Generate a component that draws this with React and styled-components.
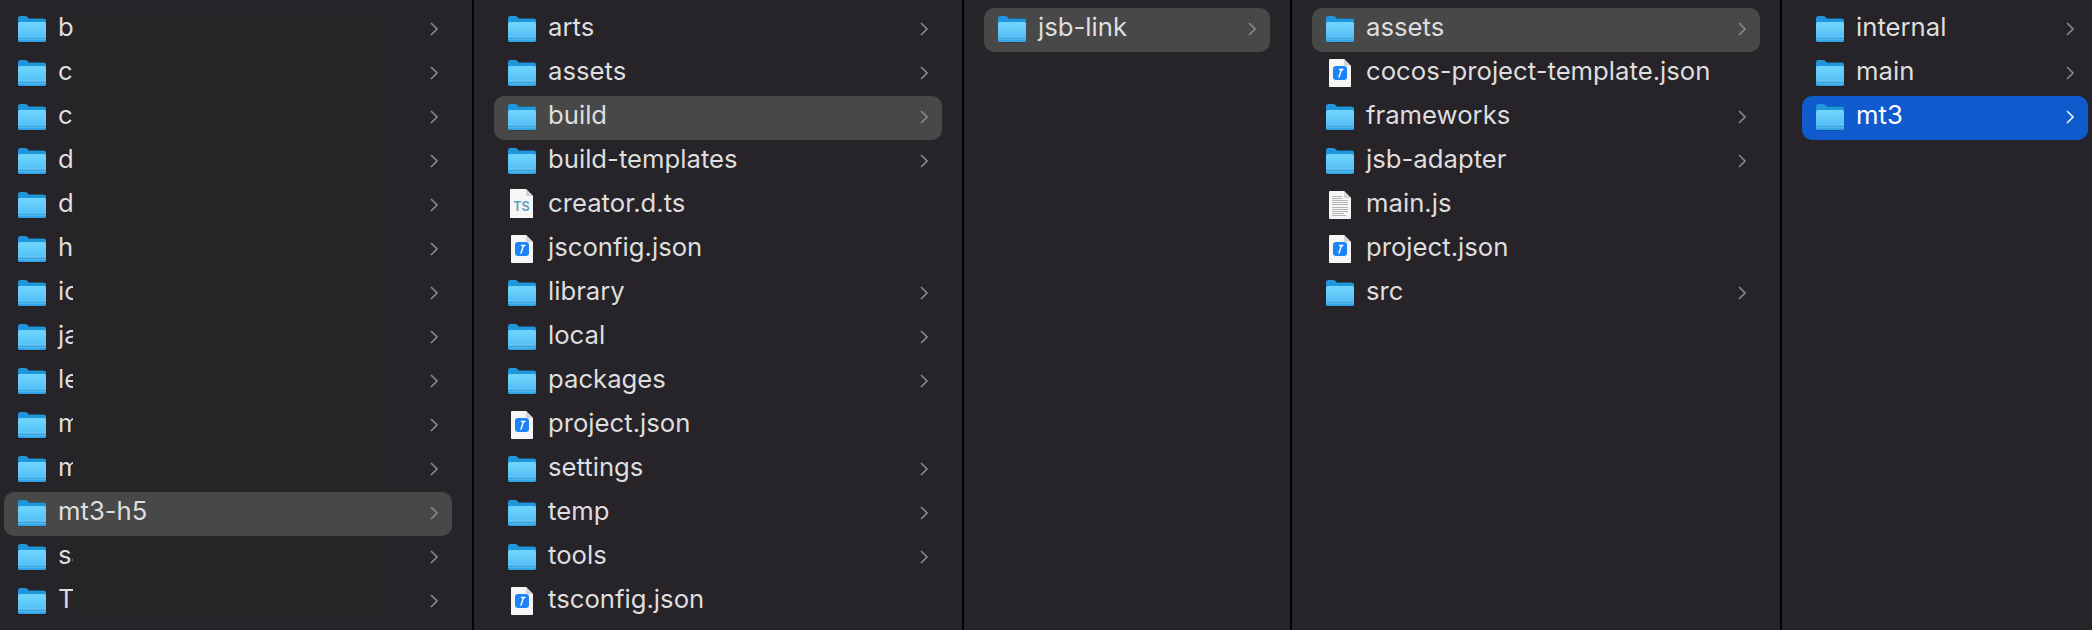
import React from 'react';
import styled, { createGlobalStyle } from 'styled-components';

const GlobalStyle = createGlobalStyle`
  html, body {
    margin: 0;
    padding: 0;
    background: #262329;
    overflow: hidden;
  }
`;

const Browser = styled.div`
  display: flex;
  width: 2092px;
  height: 630px;
  background: #262329;
  font-family: Inter, "Liberation Sans", sans-serif;
`;

const Column = styled.div`
  position: relative;
  box-sizing: border-box;
  flex: 0 0 ${p => p.$width}px;
  height: 630px;
  padding: 8px 0 0 ${p => p.$left}px;
  border-right: ${p => (p.$last ? 'none' : '2px solid #000')};
  overflow: hidden;
`;

const Row = styled.div`
  position: relative;
  z-index: ${p => (p.$state ? 2 : 0)};
  display: flex;
  align-items: center;
  gap: 12px;
  box-sizing: border-box;
  width: ${p => p.$width}px;
  height: 44px;
  padding: 0 14px;
  border-radius: 10px;
  background: ${p => (p.$state === 'active' ? '#0f5bcd' : p.$state === 'open' ? '#484848' : 'transparent')};
  color: ${p => (p.$state === 'active' ? '#fff' : '#dfdedf')};
`;

const Name = styled.span`
  flex: 1;
  font-size: 25.7px;
  line-height: 30px;
  margin-top: -7px;
  white-space: nowrap;
`;

const IconSvg = styled.svg`
  flex: 0 0 28px;
  display: block;
`;

const Chevron = styled.svg`
  flex: 0 0 8px;
  margin-top: -2px;
  color: ${p => (p.$active ? '#e8eefa' : '#89878b')};
`;

// covers the names in the first column, the open row stays above it
const Redaction = styled.div`
  position: absolute;
  z-index: 1;
  left: 73px;
  top: 15px;
  width: 304px;
  height: 598px;
  background: #252525;
`;

const FolderIcon = ({ id }) => (
  <IconSvg width="28" height="34" viewBox="0 0 28 34">
    <defs>
      <linearGradient id={id} x1="0" y1="0" x2="0" y2="1">
        <stop offset="0" stopColor="#72d5fe" />
        <stop offset="1" stopColor="#4bb9f4" />
      </linearGradient>
    </defs>
    <rect x="0.5" y="5" width="27" height="24.6" rx="2.5" fill="#000" opacity="0.3" />
    <path d="M0 5.5 Q0 3 2.5 3 H7 Q8.5 3 9.5 4 L11 5.5 H26 Q28 5.5 28 7.5 V14 H0 Z" fill="#2096dc" />
    <path d="M0 11 Q0 9 2 9 H26 Q28 9 28 11 V26.5 Q28 29 25.5 29 H2.5 Q0 29 0 26.5 Z" fill={`url(#${id})`} />
    <path d="M0 24 H28 V26.5 Q28 29 25.5 29 H2.5 Q0 29 0 26.5 Z" fill="#35a6e6" />
    <rect x="0" y="23.5" width="28" height="1" fill="#74caf4" />
    <rect x="0" y="26" width="28" height="0.8" fill="#5cb9ec" />
  </IconSvg>
);

const Page = ({ top }) => (
  <path d={`M3 ${top + 1} Q3 ${top} 4 ${top} H18 L25 ${top + 7} V${top + 27} Q25 ${top + 28} 24 ${top + 28} H4 Q3 ${top + 28} 3 ${top + 27} Z`} fill="#f6f6f6" />
);

const TsIcon = () => (
  <IconSvg width="28" height="34" viewBox="0 0 28 34">
    <path d="M2 0 H18 L25 7 V29 H2 Z" fill="#f6f6f6" />
    <path d="M18 0 V7 H25 Z" fill="#d5d5d5" />
    <text x="13.5" y="22" textAnchor="middle" fontSize="12.5" fontWeight="600" fontFamily="Inter, sans-serif" fill="#5b9fc0">TS</text>
  </IconSvg>
);

const JsonIcon = () => (
  <IconSvg width="28" height="34" viewBox="0 0 28 34">
    <Page top={2} />
    <path d="M18 2 V9 H25 Z" fill="#d5d5d5" />
    <rect x="7" y="9" width="14" height="14" rx="3" fill="#1c84f6" />
    <path d="M13.5 12.5 H17 M15.5 12.5 L13 20" stroke="#fff" strokeWidth="1.4" fill="none" strokeLinecap="round" />
  </IconSvg>
);

const DocIcon = () => (
  <IconSvg width="28" height="34" viewBox="0 0 28 34">
    <Page top={2} />
    <path d="M18 2 V9 H25 Z" fill="#d5d5d5" />
    <g fill="#b5b5b5">
      <rect x="6" y="7" width="10" height="1" />
      <rect x="6" y="9" width="10" height="1" />
      <rect x="6" y="11" width="16" height="1" />
      <rect x="6" y="13" width="16" height="1" />
      <rect x="6" y="15" width="16" height="1" />
      <rect x="6" y="18" width="16" height="1" />
      <rect x="6" y="20" width="16" height="1" />
      <rect x="6" y="22" width="16" height="1" />
      <rect x="6" y="24" width="12" height="1" />
      <rect x="6" y="26" width="14" height="1" />
    </g>
  </IconSvg>
);

const icons = { ts: TsIcon, json: JsonIcon, doc: DocIcon };

const columns = [
  {
    width: 474, left: 4, rowWidth: 448, redacted: true,
    items: ['b', 'c', 'c', 'd', 'd', 'h', 'ic', 'ja', 'le', 'm', 'm', ['mt3-h5', 'open'], 'sa', 'Te'],
  },
  {
    width: 490, left: 20, rowWidth: 448,
    items: ['arts', 'assets', ['build', 'open'], 'build-templates', ['creator.d.ts', null, 'ts'], ['jsconfig.json', null, 'json'],
      'library', 'local', 'packages', ['project.json', null, 'json'], 'settings', 'temp', 'tools', ['tsconfig.json', null, 'json']],
  },
  {
    width: 328, left: 20, rowWidth: 286,
    items: [['jsb-link', 'open']],
  },
  {
    width: 490, left: 20, rowWidth: 448,
    items: [['assets', 'open'], ['cocos-project-template.json', null, 'json'], 'frameworks', 'jsb-adapter',
      ['main.js', null, 'doc'], ['project.json', null, 'json'], 'src'],
  },
  {
    width: 310, left: 20, rowWidth: 286, last: true,
    items: ['internal', 'main', ['mt3', 'active']],
  },
];

export default function App() {
  return (
    <Browser>
      <GlobalStyle />
      {columns.map((col, c) => (
        <Column key={c} $width={col.width} $left={col.left} $last={col.last}>
          {col.redacted && <Redaction />}
          {col.items.map((item, i) => {
            const [name, state, file] = Array.isArray(item) ? item : [item];
            const FileIcon = icons[file];
            return (
              <Row key={i} $width={col.rowWidth} $state={state}>
                {FileIcon ? <FileIcon /> : <FolderIcon id={`folder-${c}-${i}`} />}
                <Name>{name}</Name>
                {!file && (
                  <Chevron $active={state === 'active'} width="8" height="14" viewBox="0 0 8 14">
                    <path d="M1 1 L7 7 L1 13" fill="none" stroke="currentColor" strokeWidth="1.6" />
                  </Chevron>
                )}
              </Row>
            );
          })}
        </Column>
      ))}
    </Browser>
  );
}
